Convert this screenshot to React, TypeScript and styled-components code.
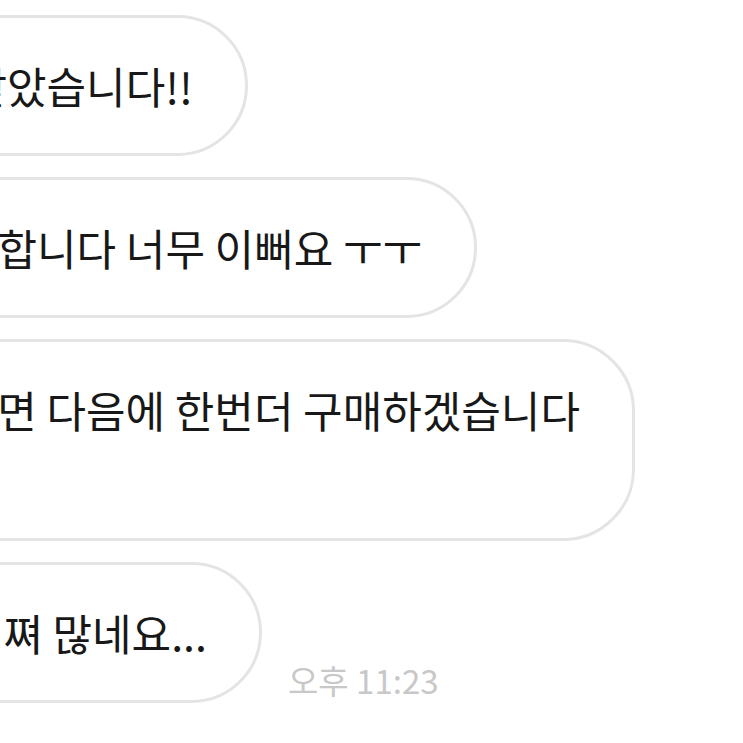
import React from 'react';
import styled, {createGlobalStyle} from "styled-components";

const GlobalStyle = createGlobalStyle`
    html, body {
        margin: 0;
        padding: 0;
        background: #ffffff;
    }
    body {
        font-family: "Noto Sans CJK KR", "Noto Sans", sans-serif;
        overflow: hidden;
    }
`

type RowProps = {
    $edge: number;
}

type Message = {
    lines: string[];
    edge: number;
}

const messages: Message[] = [
    {lines: ["선물 잘 받았습니다!!"], edge: 248},
    {lines: ["정말 감사 합니다 너무 이뻐요 ㅜㅜ"], edge: 477},
    {lines: ["다음에도 좋은 상품 있으 면 다음에 한번더 구매하겠습니다", "감사해요"], edge: 635},
    {lines: ["양이 너무 많아서 쪄 많네요..."], edge: 262},
]

export default function App() {
    return (
        <>
            <GlobalStyle/>
            <Chat>
                {messages.map((m, i) => (
                    <Row key={i} $edge={m.edge}>
                        <Bubble>
                            {m.lines.map((l, j) => (
                                <Line key={j}>{l}</Line>
                            ))}
                        </Bubble>
                        {i === messages.length - 1 && <Time>오후 11:23</Time>}
                    </Row>
                ))}
            </Chat>
        </>
    );
}

const Chat = styled.div`
    display: flex;
    flex-direction: column;
    gap: 21px;
    padding-top: 15px;
    width: 743px;
    height: 743px;
    overflow: hidden;
`

const Row = styled.div<RowProps>`
    display: flex;
    align-items: flex-end;
    width: ${props => props.$edge}px;
    justify-content: flex-end;
    position: relative;
`

const Bubble = styled.div`
    flex-shrink: 0;
    box-sizing: border-box;
    background: #ffffff;
    border: 3px solid #e4e4e4;
    border-radius: 72px;
    padding: 37px 52px 37px 60px;
    font-size: 43px;
    font-weight: 400;
    line-height: 61px;
    color: #181818;
    white-space: nowrap;
`

const Line = styled.div`
`

const Time = styled.span`
    position: absolute;
    left: calc(100% + 26px);
    bottom: 3px;
    font-size: 33px;
    line-height: 40px;
    color: #c8c8c8;
    white-space: nowrap;
`
